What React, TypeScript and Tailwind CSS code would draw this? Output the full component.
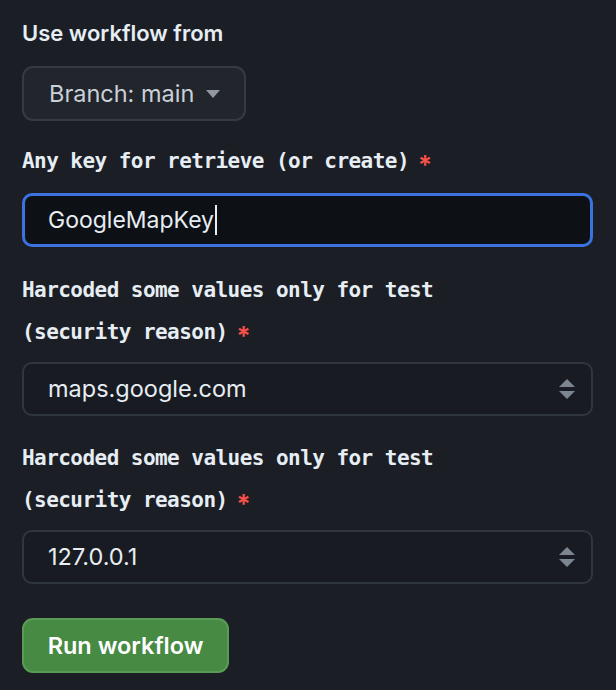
import React from 'react';

const sans = { fontFamily: 'Inter, "Noto Sans", sans-serif' };
const mono = { fontFamily: '"DejaVu Sans Mono", "Liberation Mono", monospace' };

function Label({ lines }: { lines: string[] }) {
  return (
    <div className="text-[21px] leading-[42px] font-bold tracking-[-0.55px] text-[#e6edf3]" style={mono}>
      {lines.map((l, i) => (
        <div key={i} className="h-[42px]">
          {l}
          {i === lines.length - 1 && (
            <span
              className="relative top-[6px] ml-[9px] text-[26px] leading-none font-semibold text-[#f85149]"
              style={sans}
            >
              *
            </span>
          )}
        </div>
      ))}
    </div>
  );
}

function SelectBox({ value }: { value: string }) {
  return (
    <div className="flex h-[54px] items-center justify-between rounded-[10px] border-2 border-[#30363d] bg-[#181b21] pl-[24px] pr-[14px]">
      <span className="text-[23.5px] text-[#e6edf3]" style={sans}>{value}</span>
      <svg width="20" height="26" viewBox="0 0 20 26" className="text-[#7d8590]">
        <path d="M2 11 L10 3 L18 11 Z" fill="currentColor" />
        <path d="M2 15 L10 23 L18 15 Z" fill="currentColor" />
      </svg>
    </div>
  );
}

export default function App() {
  return (
    <div className="min-h-[690px] w-[616px] bg-[#1b1e25] pl-[22px] pr-[23px] pt-[19px]">
      <div className="text-[22px] leading-[28px] font-semibold text-[#e6edf3]" style={sans}>
        Use workflow from
      </div>

      <div className="mt-[19px] flex">
        <button
          className="flex h-[55px] w-[224px] items-center gap-[11px] rounded-[11px] border-2 border-[#363a42] bg-[#22252c] pl-[25px] text-[23.5px] text-[#c9d1d9]"
          style={sans}
        >
          Branch: main
          <svg width="16" height="10" viewBox="0 0 16 10" className="text-[#9198a1]">
            <path d="M1 1 L15 1 L8 9 Z" fill="currentColor" />
          </svg>
        </button>
      </div>

      <div className="mt-[19px]">
        <Label lines={['Any key for retrieve (or create)']} />
      </div>

      <div className="mt-[11px] flex h-[54px] items-center rounded-[10px] border-[3px] border-[#3b72e0] bg-[#0d1015] pl-[23px]">
        <span className="text-[23px] text-[#e6edf3]" style={sans}>GoogleMapKey</span>
        <span className="ml-[1px] h-[30px] w-[2px] bg-[#e6edf3]" />
      </div>

      <div className="mt-[22px]">
        <Label lines={['Harcoded some values only for test', '(security reason)']} />
      </div>
      <div className="mt-[9px]">
        <SelectBox value="maps.google.com" />
      </div>

      <div className="mt-[21px]">
        <Label lines={['Harcoded some values only for test', '(security reason)']} />
      </div>
      <div className="mt-[9px]">
        <SelectBox value="127.0.0.1" />
      </div>

      <div className="mt-[34px] flex">
        <button
          className="flex h-[55px] w-[207px] items-center justify-center rounded-[11px] border-2 border-[#5a9c56] bg-[#468a44] text-[23.5px] font-semibold text-white"
          style={sans}
        >
          Run workflow
        </button>
      </div>
    </div>
  );
}
